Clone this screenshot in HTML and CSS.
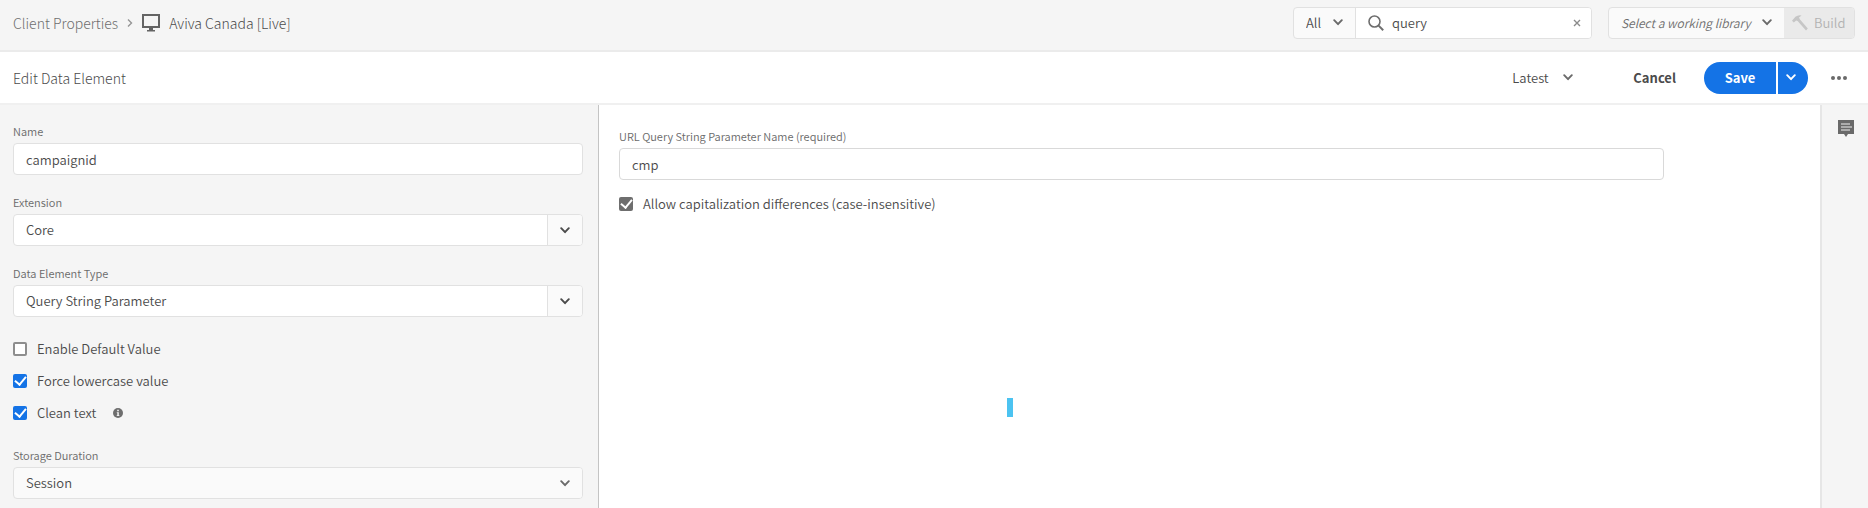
FILE: index.html
```html
<!DOCTYPE html>
<html lang="en">
<head>
    <meta charset="UTF-8">
    <meta name="viewport" content="width=device-width, initial-scale=1.0">
    <title>Edit Data Element</title>
    <link rel="stylesheet" href="styles.css">
</head>
<body>
    <svg class="symbols" aria-hidden="true">
        <symbol id="chevron" viewBox="0 0 10 7">
            <path d="M1.2 1.2 L5 5.2 L8.8 1.2" fill="none" stroke="currentColor" stroke-width="1.9" stroke-linecap="round" stroke-linejoin="round"/>
        </symbol>
    </svg>

    <header class="topbar">
        <nav class="breadcrumb">
            <a href="#">Client Properties</a>
            <svg class="crumb-arrow" viewBox="0 0 6 10"><path d="M1 1.5 L4.5 5 L1 8.5" fill="none" stroke="#959595" stroke-width="1.4"/></svg>
            <svg class="monitor" viewBox="0 0 18 18"><path fill="#646464" fill-rule="evenodd" d="M0 0H18V14H11V16H13V17.5H5V16H7V14H0ZM2 2V12H16V2Z"/></svg>
            <span class="property">Aviva Canada [Live]</span>
        </nav>
        <form class="search">
            <div class="picker scope">
                <select aria-label="Search in"><option>All</option></select>
                <svg class="chevron"><use href="#chevron"/></svg>
            </div>
            <div class="search-box">
                <svg class="magnifier" viewBox="0 0 16 16"><circle cx="6.5" cy="6.5" r="5.5" fill="none" stroke="#6e6e6e" stroke-width="1.6"/><path d="M10.6 10.6 L15.2 15.2" stroke="#6e6e6e" stroke-width="2"/></svg>
                <input type="text" value="query" aria-label="Search">
                <button type="button" class="clear" aria-label="Clear"><svg viewBox="0 0 8 8"><path d="M1 1 L7 7 M7 1 L1 7" stroke="#8a8a8a" stroke-width="1.4"/></svg></button>
            </div>
        </form>
        <div class="library">
            <div class="picker working">
                <select aria-label="Working library"><option>Select a working library</option></select>
                <svg class="chevron"><use href="#chevron"/></svg>
            </div>
            <button type="button" class="build" disabled>
                <svg viewBox="0 0 16 16"><path fill="#c6c6c6" d="M0 5.8 L3.4 1.8 Q6 -0.4 9.6 0.4 L7 2.6 L7.8 4.2 L15.8 13.6 L14 15.4 L5.6 6 L4.2 5.4 L1.8 7.6Z"/></svg>
                Build
            </button>
        </div>
    </header>

    <div class="actionbar">
        <h1>Edit Data Element</h1>
        <div class="picker revision">
            <select aria-label="Revision"><option>Latest</option></select>
            <svg class="chevron"><use href="#chevron"/></svg>
        </div>
        <button type="button" class="cancel">Cancel</button>
        <div class="save-group">
            <button type="button" class="save">Save</button>
            <button type="button" class="save-more" aria-label="More save options"><svg class="chevron"><use href="#chevron"/></svg></button>
        </div>
        <button type="button" class="more" aria-label="More">
            <svg viewBox="0 0 16 4"><g fill="#6a6a6a"><circle cx="2" cy="2" r="2"/><circle cx="8" cy="2" r="2"/><circle cx="14" cy="2" r="2"/></g></svg>
        </button>
    </div>

    <div class="content">
        <form class="settings">
            <div class="field">
                <label for="name">Name</label>
                <input type="text" id="name" class="textbox" value="campaignid">
            </div>
            <div class="field">
                <label for="extension">Extension</label>
                <div class="combo">
                    <select id="extension"><option>Core</option></select>
                    <span class="combo-arrow"><svg class="chevron"><use href="#chevron"/></svg></span>
                </div>
            </div>
            <div class="field">
                <label for="type">Data Element Type</label>
                <div class="combo">
                    <select id="type"><option>Query String Parameter</option></select>
                    <span class="combo-arrow"><svg class="chevron"><use href="#chevron"/></svg></span>
                </div>
            </div>
            <div class="checks">
                <label class="check"><input type="checkbox"> Enable Default Value</label>
                <label class="check"><input type="checkbox" checked> Force lowercase value</label>
                <div class="check-row">
                    <label class="check"><input type="checkbox" checked> Clean text</label>
                    <svg class="info" viewBox="0 0 10 10"><circle cx="5" cy="5" r="5" fill="#6e6e6e"/><path d="M4.2 1.8H5.8V3.2H4.2ZM3.8 4.2H5.8V7.2H6.4V8H3.7V7.2H4.3V5H3.8Z" fill="#f5f5f5"/></svg>
                </div>
            </div>
            <div class="field">
                <label for="storage">Storage Duration</label>
                <div class="combo storage">
                    <select id="storage"><option>Session</option></select>
                    <span class="combo-arrow"><svg class="chevron"><use href="#chevron"/></svg></span>
                </div>
            </div>
        </form>

        <main class="details">
            <div class="field">
                <label for="param">URL Query String Parameter Name (required)</label>
                <input type="text" id="param" class="textbox" value="cmp">
            </div>
            <label class="check gray"><input type="checkbox" checked> Allow capitalization differences (case-insensitive)</label>
            <div class="marker"></div>
        </main>

        <aside class="rail">
            <button type="button" aria-label="Notes">
                <svg viewBox="0 0 16 17"><path fill="#6a6a6a" d="M0 0H16V14H10L8 17L6 14H0Z"/><path stroke="#c4c4c4" stroke-width="1.7" d="M3 4H12M3 7H14M3 10H12"/></svg>
            </button>
        </aside>
    </div>
</body>
</html>
```
FILE: styles.css
```css
* {
    box-sizing: border-box;
}
body {
    margin: 0;
    min-height: 100vh;
    display: flex;
    flex-direction: column;
    background-color: #fff;
    color: #4b4b4b;
    font-family: "Noto Sans CJK SC", "Noto Sans", sans-serif;
    font-size: 13px;
    font-weight: 350;
    line-height: 20px;
}
input, select, button {
    font: inherit;
    color: inherit;
    margin: 0;
}
button {
    padding: 0;
    border: 0;
    background: none;
}
select {
    appearance: none;
    border: 0;
    border-radius: 0;
    background: none;
    width: 100%;
    height: 100%;
}
svg {
    display: block;
    flex: none;
}
.symbols {
    position: absolute;
    width: 0;
    height: 0;
}
.chevron {
    width: 10px;
    height: 7px;
    color: #6a6a6a;
}

/* top bar */
.topbar {
    display: flex;
    align-items: center;
    height: 52px;
    padding: 0 13px 4px;
    background-color: #f5f5f5;
    border-bottom: 2px solid #ebebeb;
}
.breadcrumb {
    display: flex;
    align-items: center;
    gap: 9px;
    margin-right: auto;
    font-size: 14px;
    font-weight: 300;
}
.breadcrumb a {
    color: #6e6e6e;
    text-decoration: none;
}
.crumb-arrow {
    width: 6px;
    height: 10px;
}
.monitor {
    width: 18px;
    height: 18px;
}
.search, .library {
    display: flex;
    height: 32px;
    border: 1px solid #e1e1e1;
    border-radius: 4px;
    background-color: #fafafa;
    overflow: hidden;
}
.search {
    width: 299px;
    margin-right: 16px;
}
.picker {
    position: relative;
}
.picker .chevron {
    position: absolute;
    right: 12px;
    top: 50%;
    margin-top: -4px;
    pointer-events: none;
}
.scope {
    width: 62px;
    border-right: 1px solid #e1e1e1;
}
.scope select {
    padding-left: 12px;
}
.search-box {
    flex: 1;
    display: flex;
    align-items: center;
    gap: 8px;
    padding: 0 10px 0 12px;
    background-color: #fff;
}
.magnifier {
    width: 16px;
    height: 16px;
}
.search-box input {
    flex: 1;
    min-width: 0;
    padding: 0;
    border: 0;
    background: none;
}
.clear svg {
    width: 8px;
    height: 8px;
}
.library {
    width: 247px;
}
.working {
    flex: 1;
}
.working select {
    padding-left: 12px;
    font-size: 12px;
    font-style: italic;
    color: #6e6e6e;
}
.build {
    display: flex;
    align-items: center;
    gap: 6px;
    width: 70px;
    padding-left: 8px;
    background-color: #eaeaea;
    color: #b3b3b3;
}
.build svg {
    width: 16px;
    height: 16px;
}

/* title and actions */
.actionbar {
    display: flex;
    align-items: center;
    height: 53px;
    padding: 0 21px 0 13px;
    border-bottom: 2px solid #f0f0f0;
}
.actionbar h1 {
    margin: 0 auto 0 0;
    font-size: 14px;
    font-weight: 300;
}
.revision {
    width: 74px;
    height: 32px;
    margin-right: 48px;
}
.revision select {
    padding: 0 0 0 1px;
}
.cancel {
    font-weight: 700;
    margin-right: 28px;
}
.save-group {
    display: flex;
    gap: 2px;
    height: 32px;
    margin-right: 23px;
}
.save, .save-more {
    background-color: #1473e6;
    color: #fff;
    font-weight: 700;
}
.save {
    width: 72px;
    border-radius: 16px 0 0 16px;
}
.save-more {
    width: 30px;
    padding-left: 8px;
    border-radius: 0 16px 16px 0;
}
.save-more .chevron {
    color: #fff;
}
.more svg {
    width: 16px;
    height: 4px;
}

/* page content */
.content {
    flex: 1;
    display: flex;
}
.settings {
    flex: 0 0 599px;
    padding: 17px 15px 0 13px;
    background-color: #f5f5f5;
    border-right: 1px solid #c4c4c4;
}
.field {
    margin-bottom: 18px;
}
.field label {
    display: block;
    margin-bottom: 3px;
    font-size: 11px;
    line-height: 18px;
    color: #6a6a6a;
}
.textbox, .combo {
    display: block;
    width: 100%;
    height: 32px;
    border: 1px solid #e1e1e1;
    border-radius: 4px;
    background-color: #fff;
}
.textbox {
    padding: 0 12px;
}
.combo {
    position: relative;
    overflow: hidden;
}
.combo select {
    padding: 0 40px 0 12px;
}
.combo-arrow {
    position: absolute;
    top: 0;
    right: 0;
    bottom: 0;
    width: 35px;
    display: flex;
    align-items: center;
    justify-content: center;
    border-left: 1px solid #e1e1e1;
    background-color: #fafafa;
    pointer-events: none;
}
.combo .chevron {
    color: #4b4b4b;
}
.storage {
    background-color: #fafafa;
}
.storage .combo-arrow {
    border-left: 0;
}
.storage .chevron {
    color: #6a6a6a;
}
.checks {
    margin: -2px 0 17px;
}
.check, .check-row {
    display: flex;
    align-items: center;
    height: 32px;
}
.check {
    gap: 10px;
}
.check-row {
    gap: 17px;
}
.check input {
    appearance: none;
    width: 14px;
    height: 14px;
    border: 2px solid #8e8e8e;
    border-radius: 2px;
    background-color: #fff;
}
.check input:checked {
    display: grid;
    place-items: center;
    border: 0;
    background-color: #1473e6;
}
.check input:checked::before {
    content: "";
    width: 5px;
    height: 9px;
    margin-bottom: 3px;
    border: solid #fff;
    border-width: 0 2px 2px 0;
    transform: rotate(40deg);
}
.gray input:checked {
    background-color: #6e6e6e;
}
.info {
    width: 10px;
    height: 10px;
}
.details {
    position: relative;
    flex: 1;
    padding: 22px 156px 0 20px;
}
.details .field {
    margin-bottom: 8px;
}
.details .textbox {
    border-color: #d9d9d9;
}
.marker {
    position: absolute;
    top: 293px;
    left: 408px;
    width: 6px;
    height: 19px;
    background-color: #4cc3f1;
}
.rail {
    width: 48px;
    padding: 15px 0 0 16px;
    background-color: #f5f5f5;
    border-left: 2px solid #e6e6e6;
}
.rail svg {
    width: 16px;
    height: 17px;
}
```
